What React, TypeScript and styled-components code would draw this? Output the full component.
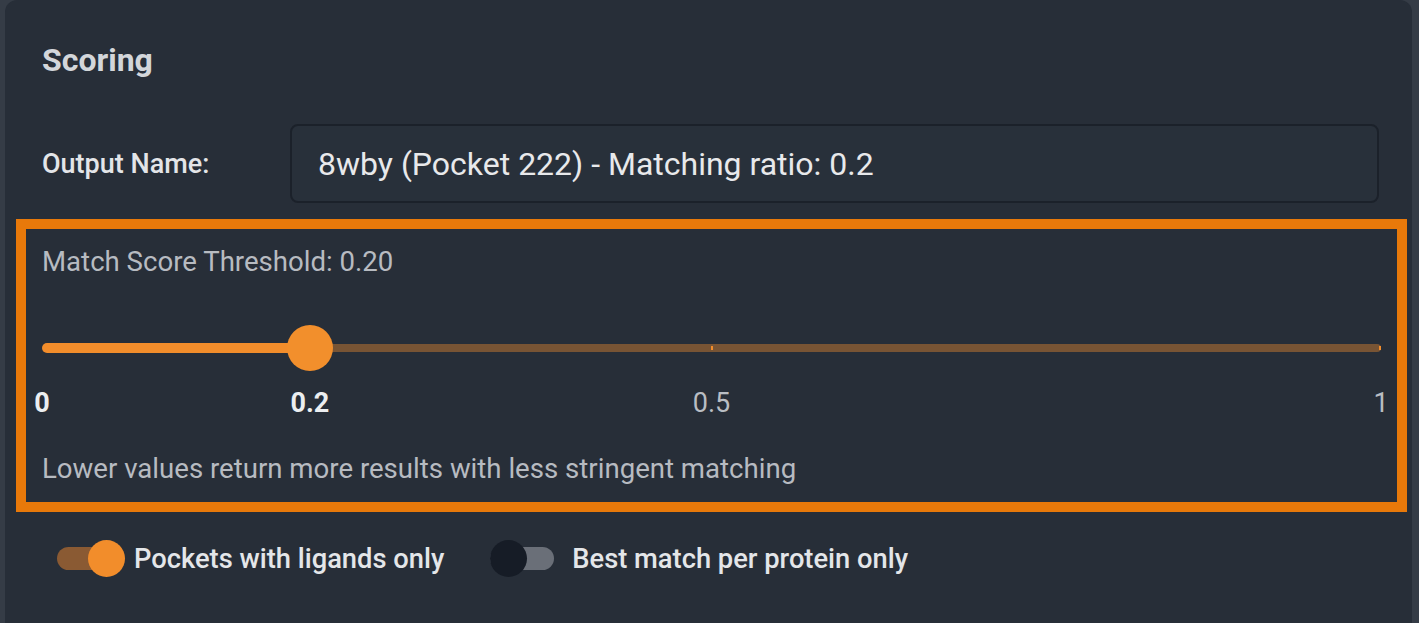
import React, { useState } from 'react';
import styled, { createGlobalStyle } from 'styled-components';

const GlobalStyle = createGlobalStyle`
  html, body {
    margin: 0;
    padding: 0;
    background: #353c46;
    font-family: Roboto, "Liberation Sans", Arial, sans-serif;
    overflow: hidden;
  }
`;

const Panel = styled.div`
  box-sizing: border-box;
  margin-left: 5px;
  width: 1407px;
  height: 660px;
  padding: 45px 5px 0 11px;
  background: #272e38;
  border-radius: 12px;
`;

const Title = styled.h2`
  margin: 0 0 49px 26px;
  font-size: 32px;
  line-height: 30px;
  font-weight: 700;
  color: #d3d6da;
`;

const FormRow = styled.div`
  display: flex;
  align-items: center;
  margin: 0 28px 16px 26px;
`;

const FieldLabel = styled.label`
  width: 248px;
  flex-shrink: 0;
  font-size: 27px;
  font-weight: 500;
  color: #e3e5e8;
`;

const TextInput = styled.input`
  flex: 1;
  box-sizing: border-box;
  height: 79px;
  padding: 0 26px;
  border: 2px solid #1b212a;
  border-radius: 8px;
  background: #28303a;
  color: #e8e9eb;
  font-family: inherit;
  font-size: 32px;
  outline: none;
`;

const Highlight = styled.section`
  border: 10px solid #e8790a;
  padding: 21px 16px;
`;

const Caption = styled.div`
  font-size: 27.6px;
  line-height: 24px;
  color: #b7bbc1;
`;

/* slider: filled part, thumb, rest of the rail in a row */
const Slider = styled.div`
  position: relative;
  display: flex;
  align-items: center;
  height: 46px;
  margin-top: 51px;
`;

const Fill = styled.div`
  height: 10px;
  border-radius: 5px 0 0 5px;
  background: #f28d2b;
`;

const Thumb = styled.div`
  flex-shrink: 0;
  width: 46px;
  height: 46px;
  margin: 0 -23px;
  border-radius: 50%;
  background: #f28f2c;
  z-index: 1;
`;

const Rest = styled.div`
  flex: 1;
  height: 8px;
  border-radius: 0 4px 4px 0;
  background: #785434;
`;

const Tick = styled.span`
  position: absolute;
  top: 21px;
  width: 2px;
  height: 4px;
  margin-left: -1px;
  background: #f28d2b;
`;

const MarkRow = styled.div`
  position: relative;
  height: 24px;
  margin-top: 20px;
`;

const MarkLabel = styled.span<{ $active: boolean }>`
  position: absolute;
  top: 0;
  transform: translateX(-50%);
  font-size: 27px;
  line-height: 24px;
  font-weight: ${(p) => (p.$active ? 700 : 400)};
  color: ${(p) => (p.$active ? '#eceef0' : '#b9bdc3')};
`;

const Helper = styled(Caption)`
  margin-top: 42px;
`;

const ToggleRow = styled.div`
  display: flex;
  align-items: center;
  gap: 46px;
  margin: 28px 0 0 41px;
`;

const ToggleItem = styled.label`
  display: flex;
  align-items: center;
  gap: 9px;
  cursor: pointer;
`;

const SwitchTrack = styled.span<{ $on: boolean }>`
  display: flex;
  align-items: center;
  justify-content: ${(p) => (p.$on ? 'flex-end' : 'flex-start')};
  width: 64px;
  height: 23px;
  margin: 7px ${(p) => (p.$on ? '4px' : '2px')} 7px 0;
  border-radius: 12px;
  background: ${(p) => (p.$on ? '#8a5a33' : '#6a6f78')};
`;

const SwitchThumb = styled.span<{ $on: boolean }>`
  flex-shrink: 0;
  width: 37px;
  height: 37px;
  margin-right: ${(p) => (p.$on ? '-4px' : '0')};
  border-radius: 50%;
  background: ${(p) => (p.$on ? '#f28d2b' : '#161c26')};
`;

const ToggleText = styled.span<{ $pad?: number }>`
  margin-left: ${(p) => p.$pad ?? 0}px;
  font-size: 27.3px;
  font-weight: 500;
  color: #e4e6e9;
`;

const marks = [0, 0.2, 0.5, 1];

const App = () => {
  const [name, setName] = useState('8wby (Pocket 222) - Matching ratio: 0.2');
  const [threshold] = useState(0.2);
  const [ligandsOnly, setLigandsOnly] = useState(true);
  const [bestOnly, setBestOnly] = useState(false);

  const pct = (v: number) => `${v * 100}%`;

  return (
    <>
      <GlobalStyle />
      <Panel>
        <Title>Scoring</Title>
        <FormRow>
          <FieldLabel>Output Name:</FieldLabel>
          <TextInput value={name} onChange={(e) => setName(e.target.value)} />
        </FormRow>
        <Highlight>
          <Caption>Match Score Threshold: {threshold.toFixed(2)}</Caption>
          <Slider>
            <Fill style={{ width: pct(threshold) }} />
            <Thumb />
            <Rest />
            <Tick style={{ left: pct(0.5) }} />
            <Tick style={{ left: 'calc(100% - 1px)' }} />
          </Slider>
          <MarkRow>
            {marks.map((m) => (
              <MarkLabel key={m} $active={m <= threshold} style={{ left: pct(m) }}>
                {m}
              </MarkLabel>
            ))}
          </MarkRow>
          <Helper>Lower values return more results with less stringent matching</Helper>
        </Highlight>
        <ToggleRow>
          <ToggleItem onClick={() => setLigandsOnly(!ligandsOnly)}>
            <SwitchTrack $on={ligandsOnly}>
              <SwitchThumb $on={ligandsOnly} />
            </SwitchTrack>
            <ToggleText>Pockets with ligands only</ToggleText>
          </ToggleItem>
          <ToggleItem onClick={() => setBestOnly(!bestOnly)}>
            <SwitchTrack $on={bestOnly}>
              <SwitchThumb $on={bestOnly} />
            </SwitchTrack>
            <ToggleText $pad={7}>Best match per protein only</ToggleText>
          </ToggleItem>
        </ToggleRow>
      </Panel>
    </>
  );
};

export default App;
